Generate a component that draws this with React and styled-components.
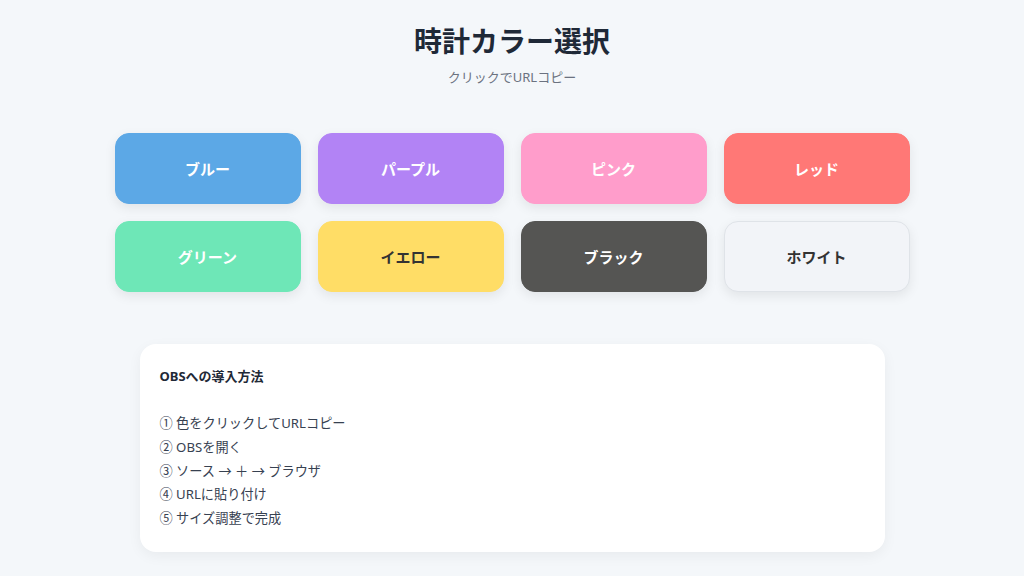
import styled, { createGlobalStyle } from "styled-components";

const GlobalStyle = createGlobalStyle`
  html, body {
    margin: 0;
    padding: 0;
    background: #f4f7fa;
    font-family: "Noto Sans", "Noto Sans CJK JP", sans-serif;
  }
`;

const colors = [
  { id: "blue", label: "ブルー", bg: "#5ca8e6", fg: "#ffffff" },
  { id: "purple", label: "パープル", bg: "#b283f5", fg: "#ffffff" },
  { id: "pink", label: "ピンク", bg: "#ff9dcb", fg: "#ffffff" },
  { id: "red", label: "レッド", bg: "#ff7876", fg: "#ffffff" },
  { id: "green", label: "グリーン", bg: "#6ee7b7", fg: "#ffffff" },
  { id: "yellow", label: "イエロー", bg: "#ffdd66", fg: "#333333" },
  { id: "black", label: "ブラック", bg: "#555553", fg: "#ffffff" },
  { id: "white", label: "ホワイト", bg: "#f2f4f8", fg: "#333333", outlined: true },
];

const steps = [
  "① 色をクリックしてURLコピー",
  "② OBSを開く",
  "③ ソース → ＋ → ブラウザ",
  "④ URLに貼り付け",
  "⑤ サイズ調整で完成",
];

const App = () => {
  return (
    <Wrapper>
      <GlobalStyle />
      <Header>
        <Title>時計カラー選択</Title>
        <Subtitle>クリックでURLコピー</Subtitle>
      </Header>
      <Palette>
        {colors.map((color) => {
          const { id, label, bg, fg, outlined } = color;
          return (
            <Swatch key={id} $bg={bg} $fg={fg} $outlined={outlined}>
              {label}
            </Swatch>
          );
        })}
      </Palette>
      <Guide>
        <GuideTitle>OBSへの導入方法</GuideTitle>
        <Steps>
          {steps.map((step) => (
            <li key={step}>{step}</li>
          ))}
        </Steps>
      </Guide>
    </Wrapper>
  );
};

const Wrapper = styled.main`
  min-height: 576px;
  box-sizing: border-box;
  padding-top: 21px;
  display: flex;
  flex-direction: column;
  align-items: center;
`;

const Header = styled.header`
  text-align: center;
`;

const Title = styled.h1`
  margin: 0;
  font-size: 28px;
  line-height: 40px;
  font-weight: 700;
  color: #1f2937;
`;

const Subtitle = styled.p`
  margin: 6px 0 0;
  font-size: 13px;
  line-height: 20px;
  color: #6b7280;
`;

const Palette = styled.section`
  margin-top: 46px;
  display: grid;
  grid-template-columns: repeat(4, 186px);
  grid-auto-rows: 71px;
  gap: 17px;
`;

const Swatch = styled.button`
  border: 1px solid ${(p) => (p.$outlined ? "#dfe3e8" : p.$bg)};
  border-radius: 14px;
  background: ${(p) => p.$bg};
  color: ${(p) => p.$fg};
  font-family: inherit;
  font-size: 15px;
  font-weight: 700;
  cursor: pointer;
  box-shadow: 0 4px 12px rgba(0, 0, 0, 0.08);
`;

const Guide = styled.section`
  margin-top: 52px;
  width: 745px;
  height: 208px;
  box-sizing: border-box;
  padding: 22px 20px;
  background: #ffffff;
  border-radius: 16px;
  box-shadow: 0 4px 14px rgba(0, 0, 0, 0.05);
  color: #374151;
`;

const GuideTitle = styled.h2`
  margin: 0;
  font-size: 13px;
  line-height: 20px;
  font-weight: 700;
  color: #1f2937;
`;

const Steps = styled.ul`
  list-style: none;
  margin: 26px 0 0;
  padding: 0;
  font-size: 13.2px;
  line-height: 23.8px;
`;

export default App;
